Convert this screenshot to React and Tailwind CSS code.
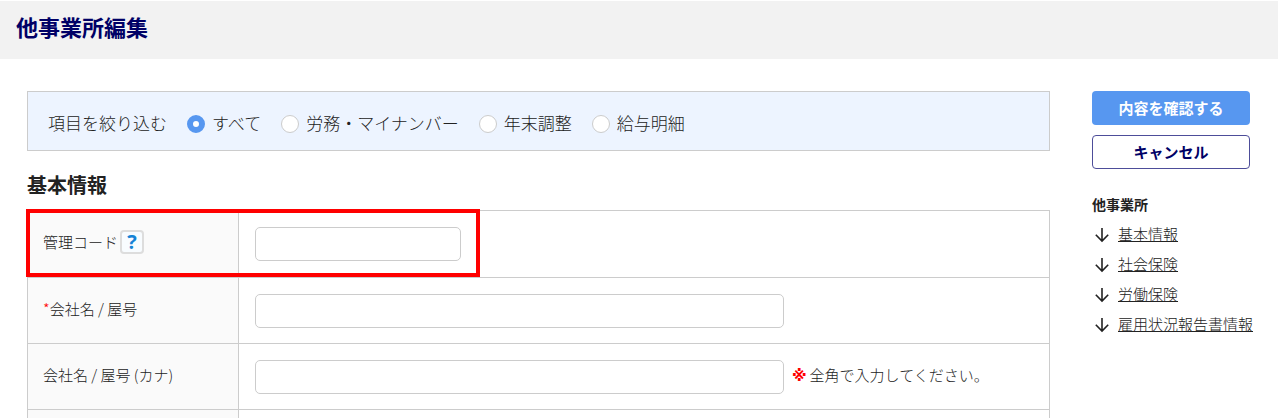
import React, { useState } from 'react';

const filters = [
  { id: 'all', label: 'すべて' },
  { id: 'labor', label: '労務・マイナンバー' },
  { id: 'yearend', label: '年末調整' },
  { id: 'payslip', label: '給与明細' },
];

const sections = [
  { id: 'basic', label: '基本情報' },
  { id: 'social', label: '社会保険' },
  { id: 'labor-insurance', label: '労働保険' },
  { id: 'employment', label: '雇用状況報告書情報' },
];

const ArrowDown = () => (
  <svg
    className="mt-0.5 shrink-0"
    width="16"
    height="16"
    viewBox="0 0 16 16"
    fill="none"
    stroke="#222"
    strokeWidth="1.6"
    aria-hidden="true"
  >
    <path d="M8 1V14M1.8 7.8L8 14L14.2 7.8" />
  </svg>
);

const TextField = ({ id, className, value, onChange }) => (
  <input
    id={id}
    name={id}
    type="text"
    className={`h-[34px] rounded-[5px] border border-[#ccc] bg-white px-2 align-middle ${className}`}
    value={value}
    onChange={onChange}
  />
);

const Row = ({ label, children }) => (
  <tr className="h-[66px] border-b border-[#ccc] first:h-[67px]">
    <th className="w-[211px] border-r border-[#ccc] bg-[#fafafa] px-[15px] pb-1 text-left font-light">{label}</th>
    <td className="px-4">{children}</td>
  </tr>
);

const App = () => {
  const [filter, setFilter] = useState('all');
  const [formState, setFormState] = useState({ code: '', company: '', companyKana: '' });

  const handleChange = (event) => {
    const { name, value } = event.target;
    setFormState((prevState) => ({ ...prevState, [name]: value }));
  };

  return (
    <div className="bg-white font-['Noto_Sans_CJK_JP',sans-serif] text-[15px] leading-5 font-light text-[#222]">
      <header className="border-t border-r-2 border-white bg-[#f2f2f2] px-4 pt-[9px] pb-[17px]">
        <h1 className="text-[22px] leading-8 font-bold text-[#000066]">他事業所編集</h1>
      </header>

      <div className="flex items-start gap-[42px] pt-8 pr-[30px] pl-[27px]">
        <main className="min-w-0 flex-1">
          <div
            role="radiogroup"
            aria-labelledby="filter-title"
            className="flex h-[60px] items-center gap-5 border border-[#ccc] bg-[#edf4ff] px-5 pt-1 text-[17px] leading-6"
          >
            <span id="filter-title">項目を絞り込む</span>
            {filters.map(({ id, label }) => (
              <label key={id} className="flex items-center gap-[7px]">
                <input
                  type="radio"
                  name="filter"
                  value={id}
                  checked={filter === id}
                  onChange={() => setFilter(id)}
                  className="mt-0.5 size-[18px] appearance-none rounded-full border border-[#ccc] bg-white checked:border-[6px] checked:border-[#5797f0]"
                />
                {label}
              </label>
            ))}
          </div>

          <h2 id="basic" className="mt-5 mb-[11px] text-[20px] leading-7 font-bold">
            基本情報
          </h2>

          <div className="relative">
            <table className="w-full border-collapse border-x border-t border-[#ccc]">
              <tbody>
                <Row
                  label={
                    <div className="flex items-center gap-0.5">
                      <label htmlFor="code">管理コード</label>
                      <button
                        type="button"
                        aria-label="ヘルプ"
                        className="flex size-6 items-center justify-center rounded-[4px] border-2 border-[#ddd] bg-[#f8fcff] font-['Open_Sans',sans-serif] text-[20px] font-bold text-[#1583d6]"
                      >
                        ?
                      </button>
                    </div>
                  }
                >
                  <TextField id="code" className="w-[206px]" value={formState.code} onChange={handleChange} />
                </Row>
                <Row
                  label={
                    <label htmlFor="company">
                      <span className="text-[#ff0000]">*</span>会社名 / 屋号
                    </label>
                  }
                >
                  <TextField id="company" className="w-[529px]" value={formState.company} onChange={handleChange} />
                </Row>
                <Row label={<label htmlFor="companyKana">会社名 / 屋号 (カナ)</label>}>
                  <TextField
                    id="companyKana"
                    className="w-[529px]"
                    value={formState.companyKana}
                    onChange={handleChange}
                  />
                  <span className="ml-2 font-['DejaVu_Sans',sans-serif] font-bold text-[#ff0000]">※</span>
                  <span className="ml-[3px]">全角で入力してください。</span>
                </Row>
                <tr>
                  <td className="h-2 border-r border-[#ccc] bg-[#fafafa]" />
                  <td />
                </tr>
              </tbody>
            </table>
            {/* Highlight around the management code row */}
            <div className="pointer-events-none absolute -top-px -left-px h-[68px] w-[454px] border-4 border-[#ff0000]" />
          </div>
        </main>

        <aside className="w-[158px] shrink-0">
          <div className="flex flex-col gap-2.5 font-bold">
            <button type="submit" className="h-[34px] rounded-[4px] bg-[#5797f0] text-white">
              内容を確認する
            </button>
            <button type="button" className="h-[34px] rounded-[4px] border border-[#4d4d99] bg-white text-[#000066]">
              キャンセル
            </button>
          </div>
          <nav className="mt-[25px]">
            <h3 className="text-[14px] font-bold">他事業所</h3>
            <ul className="mt-2.5 flex flex-col gap-2.5">
              {sections.map(({ id, label }) => (
                <li key={id} className="flex items-center gap-2 pl-0.5">
                  <ArrowDown />
                  <a href={`#${id}`} className="whitespace-nowrap underline">
                    {label}
                  </a>
                </li>
              ))}
            </ul>
          </nav>
        </aside>
      </div>
    </div>
  );
};

export default App;
